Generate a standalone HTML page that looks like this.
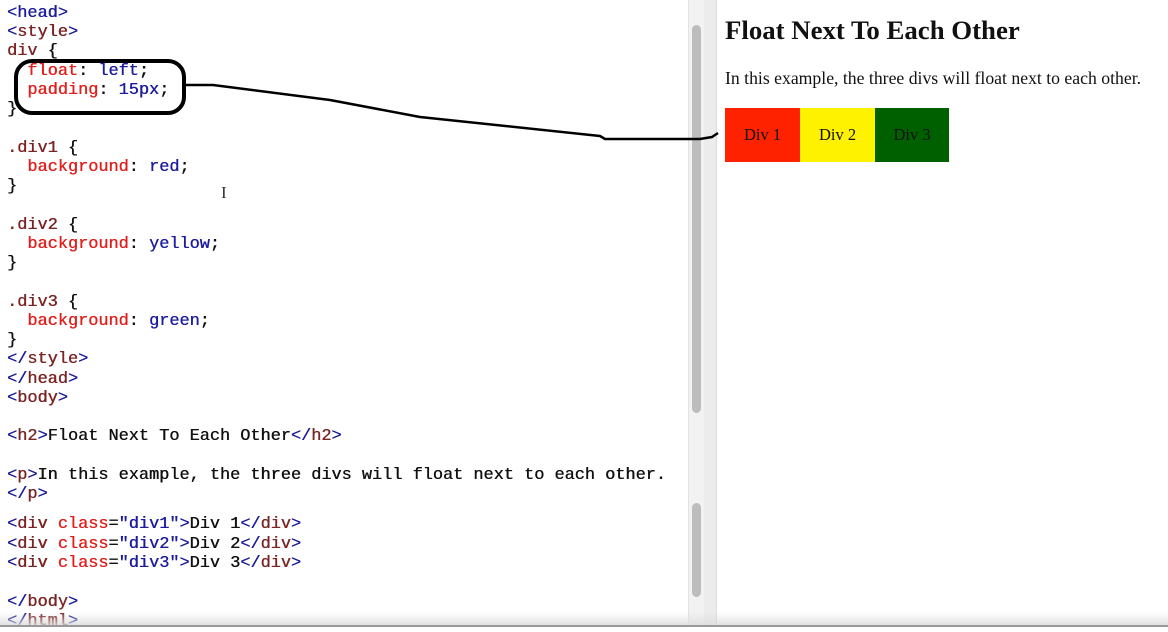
<!DOCTYPE html>
<html><head><meta charset="utf-8"><style>
body{margin:0;width:1168px;height:627px;overflow:hidden;background:#fff;position:relative;font-family:"Liberation Mono",monospace}
.l{position:absolute;left:7px;font-size:16.9px;line-height:20px;white-space:pre;color:#111;text-shadow:0.4px 0 0 currentColor}
.b{color:#1c1c9c}.t{color:#7b2424}.r{color:#e0201c}.v{color:#1c1c9c}
#sb{position:absolute;left:688px;top:0;width:16px;height:627px;background:#f2f2f2;border-left:1px solid #e2e2e2}
.th{position:absolute;left:692px;width:9px;background:#bdbdbd;border-radius:5px}
#div{position:absolute;left:704px;top:0;width:12px;height:627px;background:#ececec;border-right:1px solid #ddd}
#bot{position:absolute;left:0;top:612px;width:1168px;height:13px;background:linear-gradient(rgba(255,255,255,0),rgba(220,220,220,0.8));border-bottom:2px solid #999}
#right{position:absolute;left:725px;top:0;font-family:"Liberation Serif",serif;color:#111}
h2{position:absolute;margin:0;top:15px;left:0;font-size:26.8px;white-space:nowrap}
p{position:absolute;margin:0;top:68px;left:0;font-size:17.7px;white-space:nowrap}
.d{position:absolute;top:108px;height:54px;width:75px;line-height:54px;text-align:center;font-size:16.5px}
</style></head><body>
<div class="l" style="top:4px"><span class="b">&lt;</span><span class="v">head</span><span class="b">&gt;</span></div>
<div class="l" style="top:23px"><span class="b">&lt;</span><span class="t">style</span><span class="b">&gt;</span></div>
<div class="l" style="top:42px"><span class="t">div</span> {</div>
<div class="l" style="top:62px">  <span class="r">float</span>: <span class="v">left</span>;</div>
<div class="l" style="top:81px">  <span class="r">padding</span>: <span class="v">15px</span>;</div>
<div class="l" style="top:100px">}</div>
<div class="l" style="top:139px"><span class="t">.div1</span> {</div>
<div class="l" style="top:158px">  <span class="r">background</span>: <span class="v">red</span>;</div>
<div class="l" style="top:177px">}</div>
<div class="l" style="top:216px"><span class="t">.div2</span> {</div>
<div class="l" style="top:235px">  <span class="r">background</span>: <span class="v">yellow</span>;</div>
<div class="l" style="top:254px">}</div>
<div class="l" style="top:293px"><span class="t">.div3</span> {</div>
<div class="l" style="top:312px">  <span class="r">background</span>: <span class="v">green</span>;</div>
<div class="l" style="top:331px">}</div>
<div class="l" style="top:350px"><span class="b">&lt;/</span><span class="t">style</span><span class="b">&gt;</span></div>
<div class="l" style="top:370px"><span class="b">&lt;/</span><span class="t">head</span><span class="b">&gt;</span></div>
<div class="l" style="top:389px"><span class="b">&lt;</span><span class="t">body</span><span class="b">&gt;</span></div>
<div class="l" style="top:427px"><span class="b">&lt;</span><span class="t">h2</span><span class="b">&gt;</span>Float Next To Each Other<span class="b">&lt;/</span><span class="t">h2</span><span class="b">&gt;</span></div>
<div class="l" style="top:466px"><span class="b">&lt;</span><span class="t">p</span><span class="b">&gt;</span>In this example, the three divs will float next to each other.</div>
<div class="l" style="top:485px"><span class="b">&lt;/</span><span class="t">p</span><span class="b">&gt;</span></div>
<div class="l" style="top:515px"><span class="b">&lt;</span><span class="t">div</span> <span class="r">class</span>=<span class="v">"div1"</span><span class="b">&gt;</span>Div 1<span class="b">&lt;/</span><span class="t">div</span><span class="b">&gt;</span></div>
<div class="l" style="top:535px"><span class="b">&lt;</span><span class="t">div</span> <span class="r">class</span>=<span class="v">"div2"</span><span class="b">&gt;</span>Div 2<span class="b">&lt;/</span><span class="t">div</span><span class="b">&gt;</span></div>
<div class="l" style="top:554px"><span class="b">&lt;</span><span class="t">div</span> <span class="r">class</span>=<span class="v">"div3"</span><span class="b">&gt;</span>Div 3<span class="b">&lt;/</span><span class="t">div</span><span class="b">&gt;</span></div>
<div class="l" style="top:593px"><span class="b">&lt;/</span><span class="t">body</span><span class="b">&gt;</span></div>
<div class="l" style="top:612px"><span class="b">&lt;/</span><span class="t">html</span><span class="b">&gt;</span></div>
<div style="position:absolute;left:221px;top:183px;font-size:17px;color:#333;font-family:'Liberation Serif',serif">I</div>
<div id="sb"></div>
<div class="th" style="top:25px;height:388px"></div>
<div class="th" style="top:503px;height:94px"></div>
<div id="div"></div>
<div id="right">
<h2>Float Next To Each Other</h2>
<p>In this example, the three divs will float next to each other.</p>
<div class="d" style="left:0;background:#ff2200">Div 1</div>
<div class="d" style="left:75px;background:#fff200">Div 2</div>
<div class="d" style="left:150px;background:#006000;width:74px">Div 3</div>
</div>
<div id="bot"></div>
<svg style="position:absolute;left:0;top:0" width="1168" height="627">
<rect x="16" y="61" width="168" height="52" rx="16" fill="none" stroke="#000" stroke-width="4"/>
<path d="M185 85 L213 85 L330 100 L420 117 L600 136 L605 139 L700 139 L712 137 L718 133" fill="none" stroke="#000" stroke-width="2.5" stroke-linejoin="round"/>
</svg>
</body></html>
